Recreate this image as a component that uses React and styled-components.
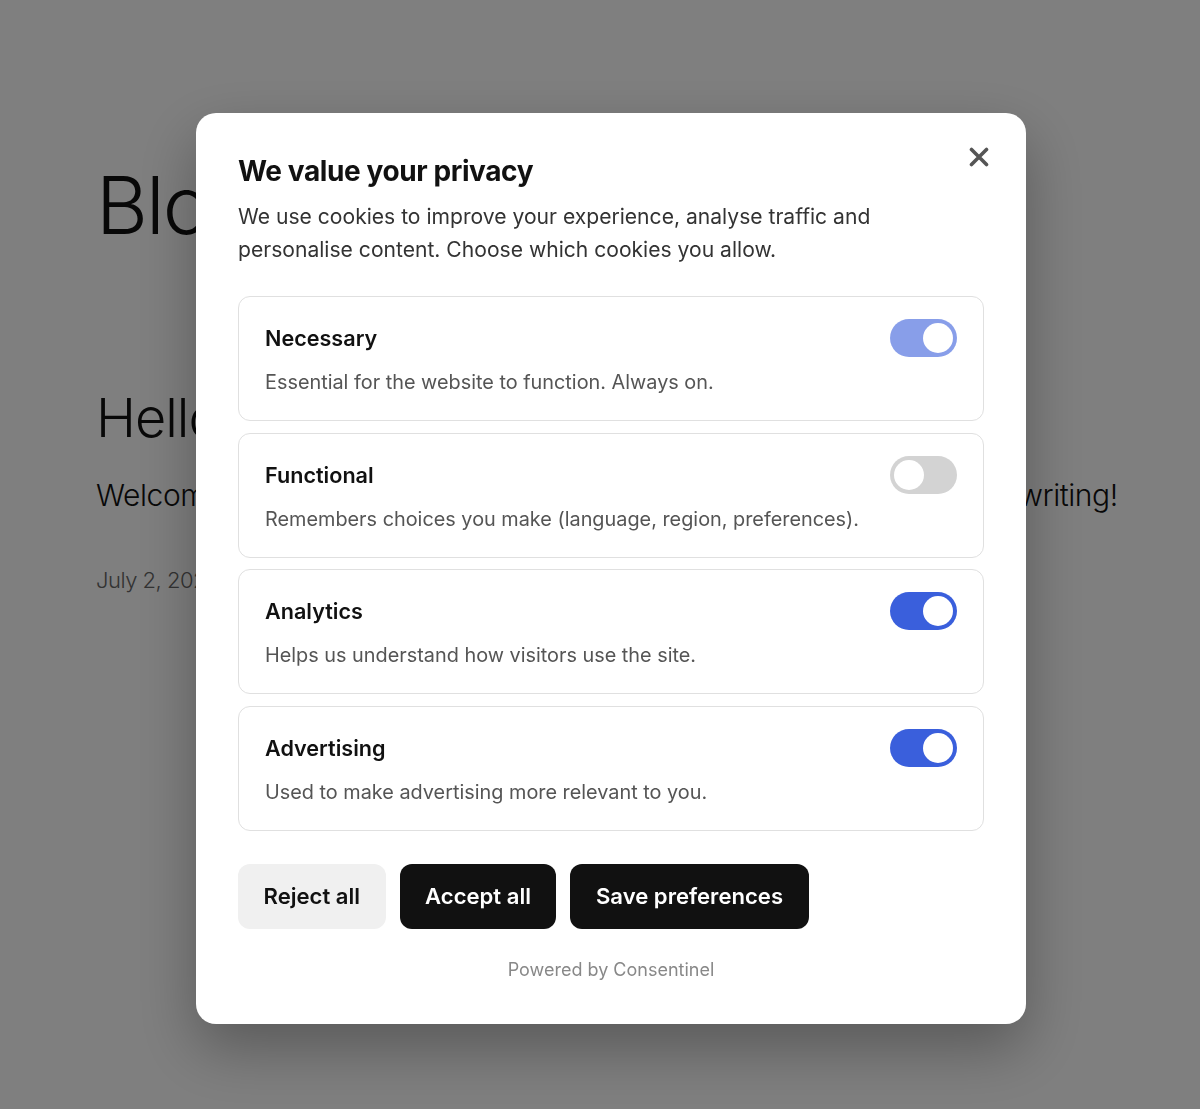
import React, { useState } from 'react'
import styled, { createGlobalStyle } from 'styled-components'

const GlobalStyle = createGlobalStyle`
  html, body {
    margin: 0;
    padding: 0;
    background: #ffffff;
  }
  body {
    font-family: Inter, "Noto Sans", sans-serif;
  }
`

const categories = [
  { id: 'necessary', title: 'Necessary', text: 'Essential for the website to function. Always on.', on: true, locked: true },
  { id: 'functional', title: 'Functional', text: 'Remembers choices you make (language, region, preferences).', on: false },
  { id: 'analytics', title: 'Analytics', text: 'Helps us understand how visitors use the site.', on: true },
  { id: 'advertising', title: 'Advertising', text: 'Used to make advertising more relevant to you.', on: true },
]

function App() {
  const [prefs, setPrefs] = useState(
    categories.reduce((acc, c) => ({ ...acc, [c.id]: c.on }), {})
  )

  const toggle = (c) => {
    if (c.locked) return
    setPrefs({ ...prefs, [c.id]: !prefs[c.id] })
  }

  return (
    <>
      <GlobalStyle />
      <Page>
        <BlogTitle>Blog</BlogTitle>
        <PostTitle>Hello world!</PostTitle>
        <PostText>Welcome to my little personal blog. This is my very first post. Happy writing!</PostText>
        <PostDate>July 2, 2025</PostDate>
      </Page>
      <Overlay>
        <Modal>
          <CloseButton aria-label="Close">
            <svg width="20" height="20" viewBox="0 0 20 20">
              <path d="M2.5 2.5 L17.5 17.5 M17.5 2.5 L2.5 17.5" stroke="#555" strokeWidth="3.6" strokeLinecap="round" />
            </svg>
          </CloseButton>
          <Heading>We value your privacy</Heading>
          <Intro>
            We use cookies to improve your experience, analyse traffic and personalise content. Choose which cookies you allow.
          </Intro>
          <CardList>
            {categories.map((c) => (
              <Card key={c.id}>
                <CardHead>
                  <CardTitle>{c.title}</CardTitle>
                  <Switch $on={prefs[c.id]} $locked={c.locked} onClick={() => toggle(c)}>
                    <Knob $on={prefs[c.id]} />
                  </Switch>
                </CardHead>
                <CardText>{c.text}</CardText>
              </Card>
            ))}
          </CardList>
          <Actions>
            <Button $variant="light">Reject all</Button>
            <Button>Accept all</Button>
            <Button>Save preferences</Button>
          </Actions>
          <Powered>Powered by Consentinel</Powered>
        </Modal>
      </Overlay>
    </>
  )
}

const Page = styled.main`
  height: 1109px;
  padding: 160px 0 0 96px;
  box-sizing: border-box;
  font-family: Inter, "Noto Sans", sans-serif;
  color: #111;
  overflow: hidden;
`

const BlogTitle = styled.h1`
  margin: 0;
  font-size: 80px;
  font-weight: 300;
  letter-spacing: -2px;
  line-height: 90px;
`

const PostTitle = styled.h2`
  margin: 136px 0 0;
  font-size: 54px;
  font-weight: 300;
  letter-spacing: -1px;
  line-height: 64px;
`

const PostText = styled.p`
  margin: 25px 0 0;
  font-size: 30px;
  font-weight: 300;
  line-height: 40px;
  letter-spacing: -0.42px;
  white-space: nowrap;
`

const PostDate = styled.p`
  margin: 52px 0 0;
  font-size: 22px;
  font-weight: 300;
  color: #666;
  letter-spacing: -0.5px;
`

const Overlay = styled.div`
  position: fixed;
  inset: 0;
  background: rgba(0, 0, 0, 0.5);
  display: flex;
  align-items: flex-start;
  justify-content: center;
  padding-top: 113px;
  padding-left: 22px;
  box-sizing: border-box;
`

const Modal = styled.section`
  position: relative;
  width: 830px;
  box-sizing: border-box;
  padding: 41px 42px 42px;
  background: #fff;
  border-radius: 20px;
  box-shadow: 0 24px 60px rgba(0, 0, 0, 0.3);
`

const CloseButton = styled.button`
  position: absolute;
  top: 34px;
  right: 37px;
  width: 20px;
  height: 20px;
  padding: 0;
  border: 0;
  background: none;
  display: flex;
  cursor: pointer;
`

const Heading = styled.h2`
  margin: 0;
  font-size: 28px;
  line-height: 34px;
  font-weight: 700;
  letter-spacing: -0.4px;
  color: #111;
`

const Intro = styled.p`
  margin: 12px 0 0;
  max-width: 650px;
  font-size: 21.1px;
  line-height: 33px;
  color: #333;
`

const CardList = styled.div`
  margin-top: 30px;
  display: flex;
  flex-direction: column;
  gap: 11.5px;
`

const Card = styled.div`
  height: 125px;
  box-sizing: border-box;
  border: 1px solid #e0e0e0;
  border-radius: 12px;
  padding: 22px 26px 0;
`

const CardHead = styled.div`
  display: flex;
  align-items: center;
  justify-content: space-between;
`

const CardTitle = styled.h3`
  margin: 0;
  font-size: 21.6px;
  font-weight: 600;
  color: #111;
`

const CardText = styled.p`
  margin: 10px 0 0;
  font-size: 19.85px;
  line-height: 30px;
  color: #555;
`

const Switch = styled.button`
  position: relative;
  width: 67px;
  height: 38px;
  padding: 0;
  border: 0;
  border-radius: 19px;
  background: ${(p) => (p.$on ? '#3a5fdc' : '#d3d3d3')};
  opacity: ${(p) => (p.$locked ? 0.6 : 1)};
  cursor: ${(p) => (p.$locked ? 'default' : 'pointer')};
`

const Knob = styled.span`
  position: absolute;
  top: 4px;
  left: ${(p) => (p.$on ? '33px' : '4px')};
  width: 30px;
  height: 30px;
  border-radius: 50%;
  background: #fff;
`

const Actions = styled.div`
  margin-top: 33px;
  display: flex;
  gap: 14px;
`

const Button = styled.button`
  height: 65px;
  padding: 0 25.5px;
  border: 0;
  border-radius: 12px;
  font-family: Inter, "Noto Sans", sans-serif;
  font-size: 22.1px;
  font-weight: 600;
  background: ${(p) => (p.$variant === 'light' ? '#f0f0f0' : '#111')};
  color: ${(p) => (p.$variant === 'light' ? '#111' : '#fff')};
  cursor: pointer;
`

const Powered = styled.p`
  margin: 29px 0 0;
  text-align: center;
  font-size: 18px;
  line-height: 24px;
  color: #888;
`

export default App
